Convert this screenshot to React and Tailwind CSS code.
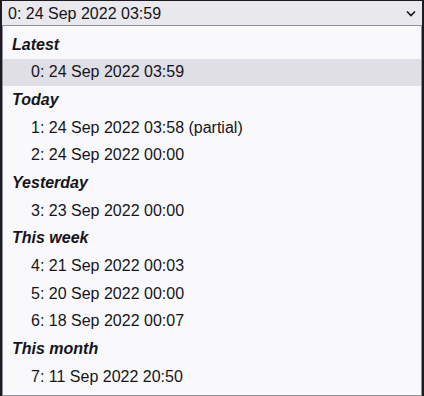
import React from "react";

const groups = [
  { label: "Latest", items: ["0: 24 Sep 2022 03:59"] },
  { label: "Today", items: ["1: 24 Sep 2022 03:58 (partial)", "2: 24 Sep 2022 00:00"] },
  { label: "Yesterday", items: ["3: 23 Sep 2022 00:00"] },
  { label: "This week", items: ["4: 21 Sep 2022 00:03", "5: 20 Sep 2022 00:00", "6: 18 Sep 2022 00:07"] },
  { label: "This month", items: ["7: 11 Sep 2022 20:50"] },
];

const App = () => {
  const selected = "0: 24 Sep 2022 03:59";

  return (
    <div
      className="w-[424px] h-[396px] bg-[#1c1b22] pl-[2px] pr-[2px] pt-[1px] flex flex-col text-[16px] text-[#15141a]"
      style={{ fontFamily: '"Liberation Sans", Arial, sans-serif' }}
    >
      <div className="h-[25px] bg-[#e9e8ed] border-b border-[#8f8f9d] flex items-center justify-between pl-[6px] pr-[6px] pt-[1px]">
        <span className="leading-none">{selected}</span>
        <svg width="10" height="7" viewBox="0 0 10 7" fill="none">
          <path d="M1 1.5 L5 5.5 L9 1.5" stroke="#15141a" strokeWidth="1.6" />
        </svg>
      </div>
      <div className="flex-1 bg-[#f9f9fb] border border-t-0 border-[#8f8f9d] pt-[5px]">
        {groups.map((g) => (
          <div key={g.label}>
            <div className="h-[27.67px] flex items-center pl-[9px] font-bold italic">{g.label}</div>
            {g.items.map((it) => (
              <div
                key={it}
                className={`h-[27.67px] flex items-center pl-[28px] ${it === selected ? "bg-[#e0dfe5]" : ""}`}
              >
                {it}
              </div>
            ))}
          </div>
        ))}
      </div>
    </div>
  );
};

export default App;
